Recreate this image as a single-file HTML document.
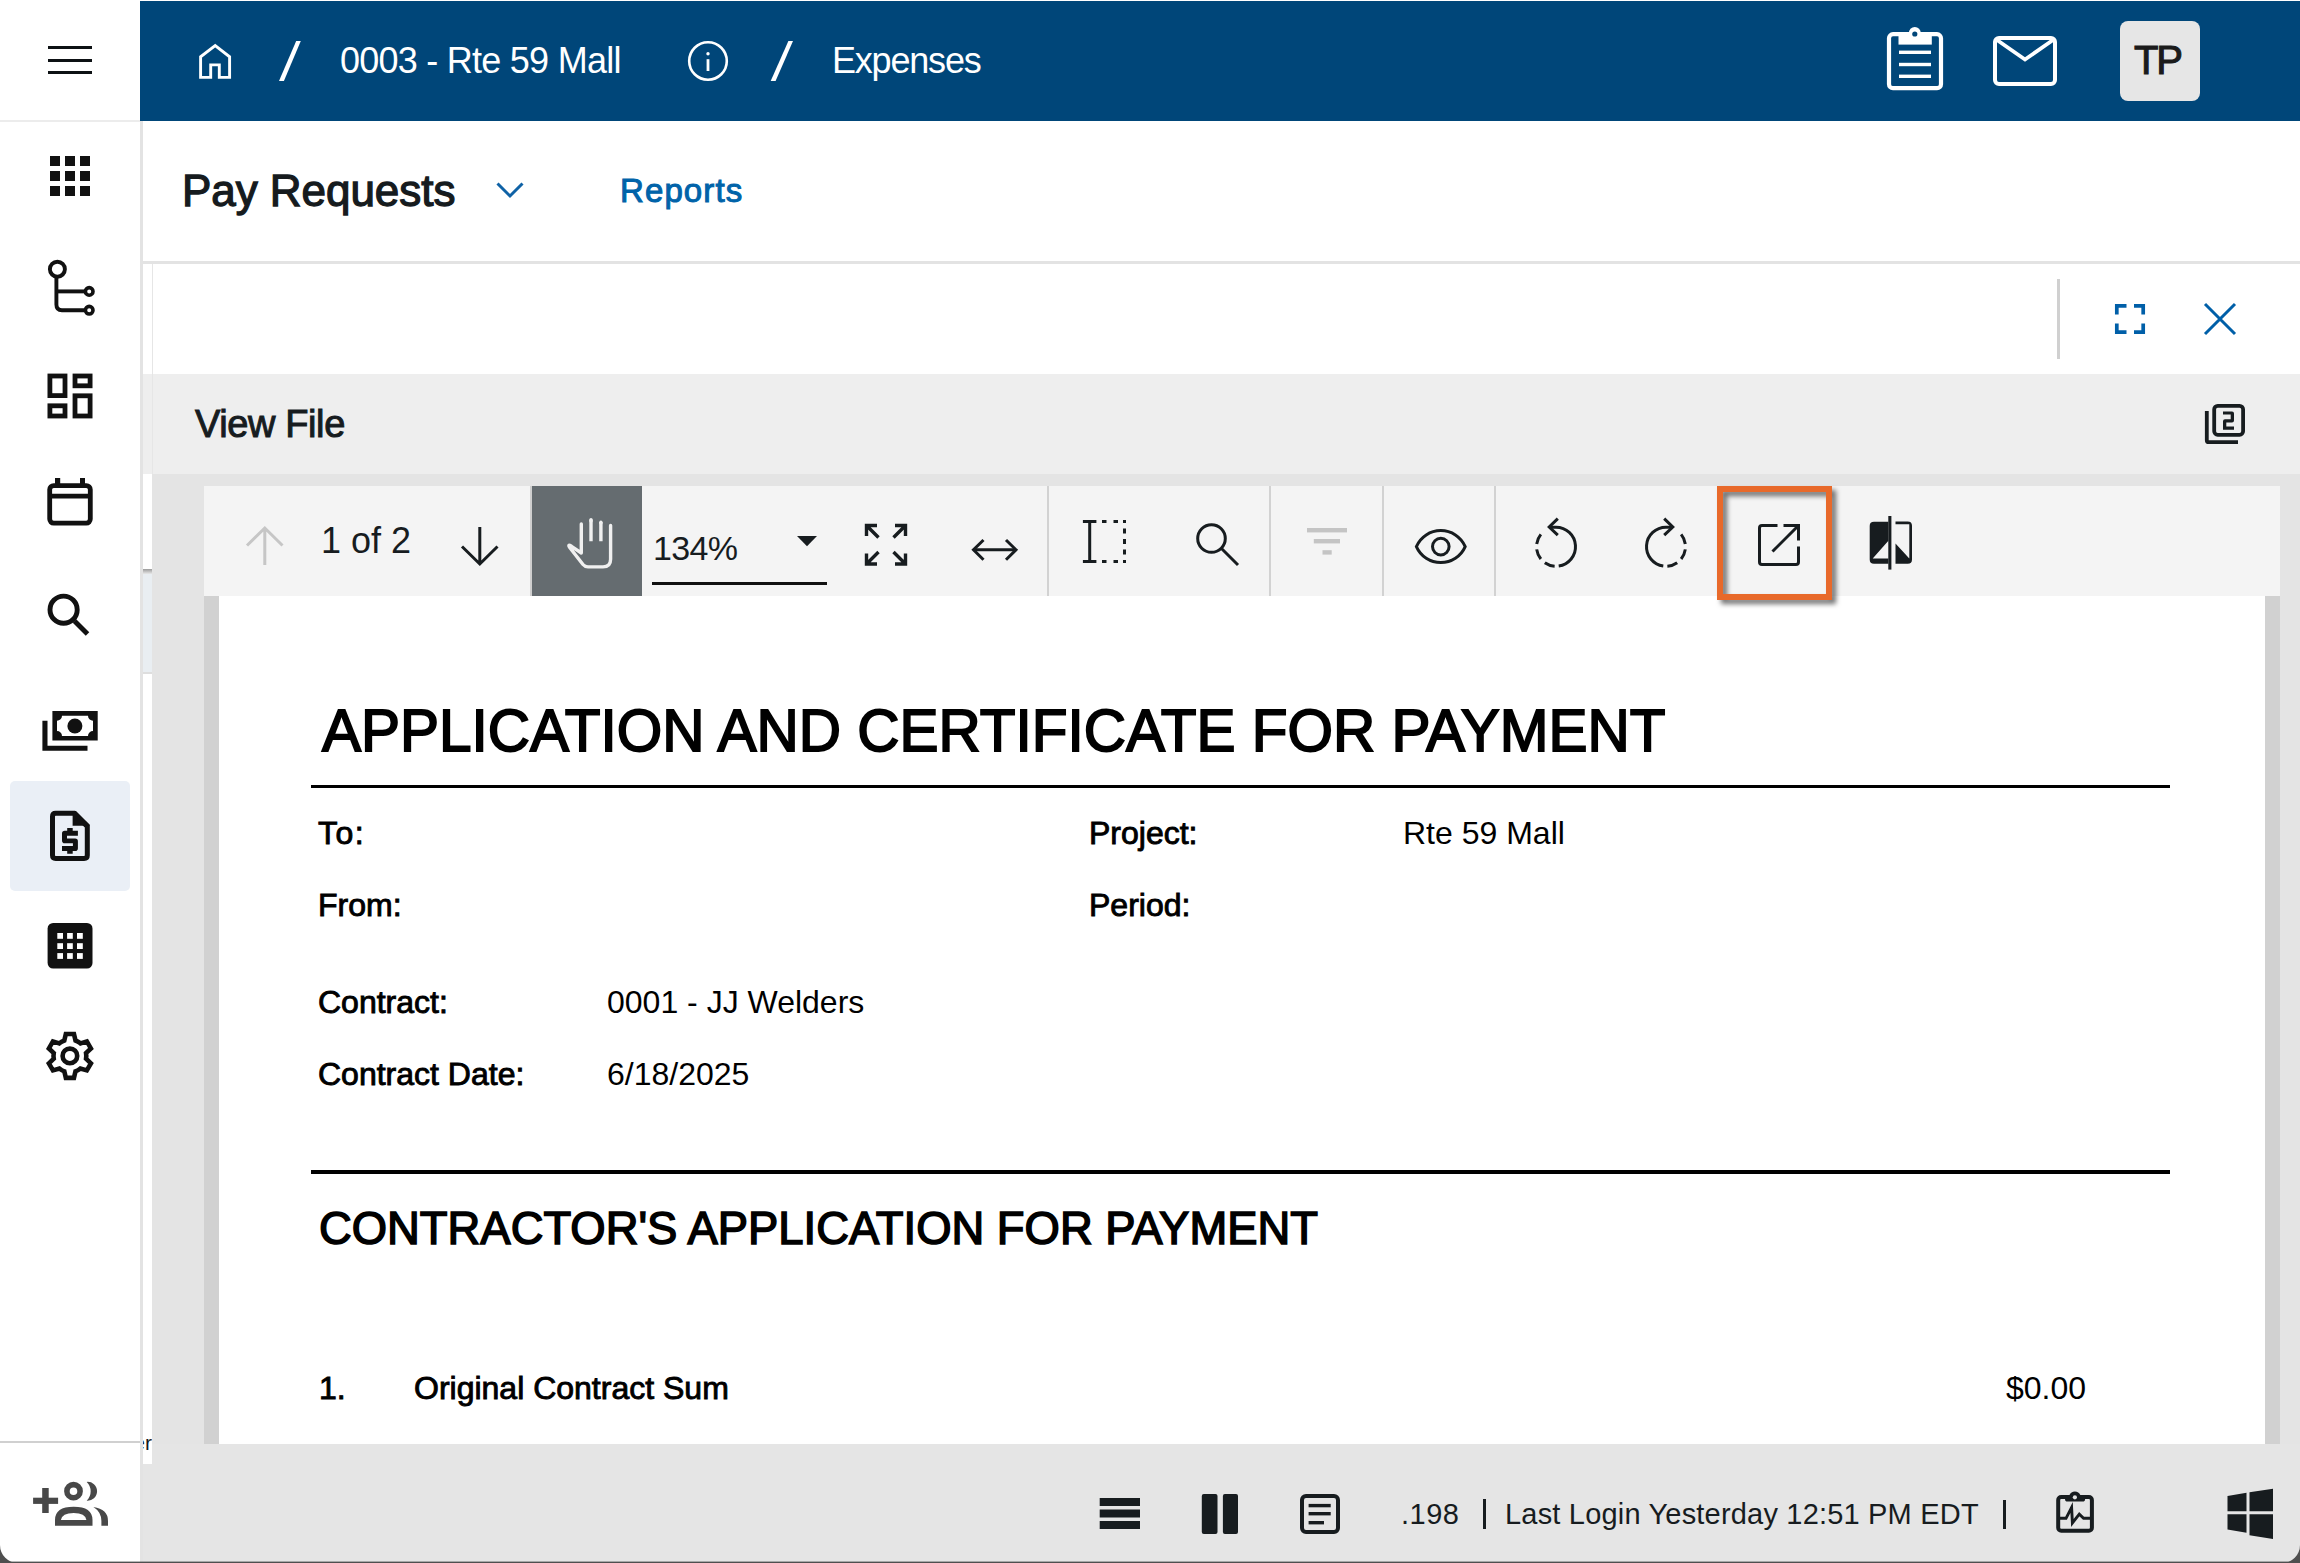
<!DOCTYPE html>
<html><head><meta charset="utf-8">
<style>
*{margin:0;padding:0;box-sizing:border-box}
html,body{width:2300px;height:1563px;overflow:hidden;background:#fff;font-family:"Liberation Sans",sans-serif;color:#171c1f}
.a{position:absolute}
.t{position:absolute;white-space:nowrap;line-height:1}
svg{position:absolute;overflow:visible}
</style></head><body>
<div id="root" class="a" style="left:0;top:0;width:2300px;height:1563px;overflow:hidden">

<!-- sidebar -->
<div class="a" style="left:0;top:0;width:140px;height:1563px;background:#fff"></div>
<div class="a" style="left:0;top:120px;width:140px;height:2px;background:#ececec"></div>
<div class="a" style="left:140px;top:120px;width:3px;height:1443px;background:#e3e3e3"></div>
<div class="a" style="left:0;top:1441px;width:140px;height:2px;background:#d0d0d0"></div>


<!-- sidebar icons -->
<div class="a" style="left:10px;top:781px;width:120px;height:110px;background:#eaeff6;border-radius:5px"></div>
<svg style="left:0;top:0" width="140" height="1563">
<g fill="#111">
<rect x="50" y="156" width="10" height="10"/><rect x="65" y="156" width="10" height="10"/><rect x="80" y="156" width="10" height="10"/>
<rect x="50" y="171" width="10" height="10"/><rect x="65" y="171" width="10" height="10"/><rect x="80" y="171" width="10" height="10"/>
<rect x="50" y="186" width="10" height="10"/><rect x="65" y="186" width="10" height="10"/><rect x="80" y="186" width="10" height="10"/>
</g>
<g fill="none" stroke="#111" stroke-width="3.9">
<circle cx="57.4" cy="269.2" r="7.5"/>
<path d="M56.4 276.5 V304.5 Q56.4 310.2 62 310.2 H84.5"/>
<path d="M56.4 291.4 H84.5"/>
<circle cx="89.2" cy="291.4" r="3.8" stroke-width="3.6"/>
<circle cx="89.2" cy="310.2" r="3.8" stroke-width="3.6"/>
</g>
<g fill="none" stroke="#111" stroke-width="4.8">
<rect x="49.9" y="376" width="15.1" height="19.6"/>
<rect x="75" y="376" width="15.1" height="9.8"/>
<rect x="49.9" y="405.8" width="15.1" height="10.2"/>
<rect x="75" y="395.8" width="15.1" height="20.2"/>
</g>
<g fill="none" stroke="#111" stroke-width="4.8">
<rect x="49.7" y="485.6" width="40.6" height="37.5" rx="4"/>
<path d="M49.7 496.1 H90.3"/>
</g>
<g fill="#111">
<rect x="55" y="478" width="5.2" height="7"/><rect x="80" y="478" width="5" height="7"/>
</g>
<g fill="none" stroke="#111" stroke-width="4.9">
<circle cx="63.6" cy="609.7" r="13.6"/>
<path d="M74.5 621 L87.5 634"/>
</g>
<g fill="#111">
<path fill-rule="evenodd" d="M52.4 711 H97.7 V740.6 H52.4 Z M62 715.8 H88 A5 5 0 0 0 93 720.8 V731 A5 5 0 0 0 88 736 H62 A5 5 0 0 0 57 731 V720.8 A5 5 0 0 0 62 715.8 Z"/>
<circle cx="74.9" cy="726" r="7.5"/>
<path d="M42.4 720.7 H47.5 V745.8 H87.5 V750.7 H42.4 Z"/>
</g>
<g>
<path d="M52.5 816.5 Q52.5 813.3 55.7 813.3 H74 L87.3 826.6 V855.2 Q87.3 858.4 84.1 858.4 H55.7 Q52.5 858.4 52.5 855.2 Z" fill="none" stroke="#111" stroke-width="5"/>
<path d="M72.6 811 H76 L89.8 824.8 V825.8 H72.6 Z" fill="#111"/>
<path d="M70 828 V831.6 H76.8 V836.5 H70 V832 M70 828 V853.8" fill="none" stroke="none"/>
<path d="M67.2 828 H72.7 V830.8 H77.9 V835.8 H67 V838.6 H75.1 A2.8 2.8 0 0 1 77.9 841.4 V848.2 A2.8 2.8 0 0 1 75.1 851 H72.7 V853.8 H67.2 V851 H62 V846 H72.9 V843.2 H64.8 A2.8 2.8 0 0 1 62 840.4 V833.6 A2.8 2.8 0 0 1 64.8 830.8 H67.2 Z" fill="#111"/>
</g>
<g>
<rect x="47.6" y="923" width="44.9" height="45.5" rx="5.5" fill="#111"/>
<g fill="#fff">
<rect x="57.3" y="933" width="5.7" height="5.8"/><rect x="67.1" y="933" width="5.7" height="5.8"/><rect x="77" y="933" width="5.8" height="5.8"/>
<rect x="57.3" y="943.2" width="5.7" height="5.8"/><rect x="67.1" y="943.2" width="5.7" height="5.8"/><rect x="77" y="943.2" width="5.8" height="5.8"/>
<rect x="57.3" y="953.1" width="5.7" height="5.8"/><rect x="67.1" y="953.1" width="5.7" height="5.8"/><rect x="77" y="953.1" width="5.8" height="5.8"/>
</g>
</g>
<g transform="translate(69.9 1055.9)" fill="none" stroke="#111" stroke-width="4.6">
<path d="M-5.61 -15.41 L-4.06 -21.93 L4.06 -21.93 L5.61 -15.41 A16.4 16.4 0 0 1 10.54 -12.56 L16.96 -14.48 L21.02 -7.44 L16.15 -2.85 A16.4 16.4 0 0 1 16.15 2.85 L21.02 7.44 L16.96 14.48 L10.54 12.56 A16.4 16.4 0 0 1 5.61 15.41 L4.06 21.93 L-4.06 21.93 L-5.61 15.41 A16.4 16.4 0 0 1 -10.54 12.56 L-16.96 14.48 L-21.02 7.44 L-16.15 2.85 A16.4 16.4 0 0 1 -16.15 -2.85 L-21.02 -7.44 L-16.96 -14.48 L-10.54 -12.56 A16.4 16.4 0 0 1 -5.61 -15.41 Z" stroke-linejoin="miter"/>
<circle cx="0" cy="0" r="7.3"/>
</g>
<g fill="#484848">
<rect x="42.2" y="1488" width="6.5" height="25"/>
<rect x="33.1" y="1497.7" width="25" height="6.2"/>
<circle cx="73.5" cy="1491.2" r="6.6" fill="none" stroke="#484848" stroke-width="5.6"/>
<path fill-rule="evenodd" d="M55 1525.8 V1520 Q55 1506.8 73.7 1506.8 Q92.5 1506.8 92.5 1520 V1525.8 Z M60.9 1520 Q62 1513 73.7 1513 Q85.4 1513 86.4 1520 Z"/>
<path d="M86.7 1481.9 A9.4 9.4 0 1 1 86.7 1500.6 A13 13 0 0 0 86.7 1481.9 Z"/>
<path d="M93.4 1507 Q108 1509 108 1521 V1525.8 H101.4 V1521 Q101.4 1512 93.4 1507 Z"/>
</g>
</svg>

<!-- header -->
<div class="a" style="left:140px;top:1px;width:2160px;height:120px;background:#004679"></div>


<!-- hamburger -->
<div class="a" style="left:48px;top:46px;width:44px;height:3px;background:#0d1114"></div>
<div class="a" style="left:48px;top:58.5px;width:44px;height:3px;background:#0d1114"></div>
<div class="a" style="left:48px;top:71px;width:44px;height:3px;background:#0d1114"></div>
<!-- home -->
<svg style="left:0;top:0" width="2300" height="130">
<path d="M200.6 77.4 V56.8 L215.2 45.6 L229.6 56.8 V77.4 H219.3 V64.9 H210.7 V77.4 Z" fill="none" stroke="#fff" stroke-width="2.9" stroke-linejoin="miter"/>
<path d="M296.2 41 H300.8 L283.9 80.9 H279 Z" fill="#fff"/>
<circle cx="708" cy="61" r="18.8" fill="none" stroke="#fff" stroke-width="2.6"/>
<circle cx="708" cy="53.8" r="1.7" fill="#fff"/>
<rect x="706.6" y="59.2" width="2.8" height="11.8" fill="#fff"/>
<path d="M788.4 41 H793 L775.6 81 H770.7 Z" fill="#fff"/>
<!-- clipboard -->
<rect x="1889" y="34.2" width="52" height="54" rx="4" fill="none" stroke="#fff" stroke-width="4.2"/>
<rect x="1898.5" y="32" width="33.3" height="12.6" fill="#fff"/>
<circle cx="1914.8" cy="33" r="6" fill="#fff"/>
<circle cx="1914.8" cy="34" r="2.6" fill="#004679"/>
<rect x="1899" y="50.6" width="32" height="3.4" fill="#fff"/>
<rect x="1899" y="62.8" width="32" height="3.4" fill="#fff"/>
<rect x="1899" y="74.6" width="32" height="3.4" fill="#fff"/>
<!-- mail -->
<rect x="1995" y="38" width="60" height="46" rx="4" fill="none" stroke="#fff" stroke-width="4"/>
<path d="M1997 40 L2025 59.5 L2053 40" fill="none" stroke="#fff" stroke-width="3.8"/>
</svg>
<div class="a" style="left:2120px;top:21px;width:80px;height:80px;background:#e6e6e6;border-radius:8px"></div>
<div id="tp" class="t" style="left:2134px;top:40px;font-size:40px;letter-spacing:-2.3px;-webkit-text-stroke:1.1px #1b1b1b;color:#1b1b1b">TP</div>
<div id="h1" class="t" style="left:340px;top:43px;font-size:36px;letter-spacing:-0.75px;color:#fff">0003 - Rte 59 Mall</div>
<div id="h2" class="t" style="left:832px;top:43px;font-size:36px;letter-spacing:-1.2px;color:#fff">Expenses</div>

<!-- subheader -->
<div id="pr" class="t" style="left:182px;top:169px;font-size:44px;letter-spacing:-0.05px;-webkit-text-stroke:1.3px #161b1e;color:#161b1e">Pay Requests</div>
<svg style="left:0;top:0" width="800" height="260"><path d="M497.5 183.5 L510 196 L522.5 183.5" fill="none" stroke="#0f62a6" stroke-width="3"/></svg>
<div id="rep" class="t" style="left:620px;top:174px;font-size:33px;letter-spacing:1.1px;-webkit-text-stroke:1px #0063a9;color:#0063a9">Reports</div>

<div class="a" style="left:143px;top:261px;width:2157px;height:3px;background:#e3e3e3"></div>

<!-- left strip -->
<div class="a" style="left:143px;top:374px;width:9px;height:100px;background:#eeeeee"></div>
<div class="a" style="left:143px;top:569px;width:9px;height:5px;background:linear-gradient(#9a9a9a,#e9e9e9)"></div>
<div class="a" style="left:143px;top:574px;width:9px;height:98px;background:#e9eef2"></div>
<div class="a" style="left:143px;top:672px;width:9px;height:2px;background:#dedede"></div>
<div class="a" style="left:152px;top:264px;width:1px;height:211px;background:#e6e6e6"></div>

<!-- overlay header -->
<div class="a" style="left:2057px;top:279px;width:3px;height:80px;background:#d0d0d0"></div>


<svg style="left:0;top:0" width="2300" height="380">
<g fill="none" stroke="#005fa8" stroke-width="3.7" stroke-linecap="butt">
<path d="M2116.8 314.5 V305.8 H2126.5"/>
<path d="M2134 305.8 H2143.2 V314.5"/>
<path d="M2116.8 323.5 V332.2 H2126.5"/>
<path d="M2134 332.2 H2143.2 V323.5"/>
</g>
<path d="M2205 304 L2235 334 M2235 304 L2205 334" fill="none" stroke="#005fa8" stroke-width="3"/>
</svg>

<!-- view file bar -->
<div class="a" style="left:153px;top:374px;width:2147px;height:100px;background:#eeeeee"></div>

<!-- viewer bg -->
<div class="a" style="left:152px;top:474px;width:2148px;height:1090px;background:#e4e4e4"></div>
<!-- toolbar -->
<div class="a" style="left:204px;top:486px;width:2076px;height:110px;background:#f4f4f4"></div>

<!-- toolbar content -->
<div class="a" style="left:530px;top:486px;width:2px;height:110px;background:#cfcfcf"></div>
<div class="a" style="left:532px;top:486px;width:110px;height:110px;background:#656c70"></div>
<div class="a" style="left:1047px;top:486px;width:2px;height:110px;background:#d2d2d2"></div>
<div class="a" style="left:1269px;top:486px;width:2px;height:110px;background:#d2d2d2"></div>
<div class="a" style="left:1382px;top:486px;width:2px;height:110px;background:#d2d2d2"></div>
<div class="a" style="left:1494px;top:486px;width:2px;height:110px;background:#d2d2d2"></div>
<div id="pg" class="t" style="left:321px;top:523px;font-size:36px;color:#171c1f">1 of 2</div>
<div id="zm" class="t" style="left:653px;top:531px;font-size:34px;letter-spacing:-0.7px;color:#171c1f">134%</div>
<div class="a" style="left:652px;top:582px;width:175px;height:2.8px;background:#111"></div>
<svg style="left:0;top:0" width="2300" height="620">
<path d="M797 536 H817 L807 546.2 Z" fill="#171c1f"/>
<g fill="none" stroke="#c6c6c6" stroke-width="3">
<path d="M264.8 565 V529.5 M247 545.5 L264.8 528 L282.5 545.5"/>
</g>
<g fill="none" stroke="#171c1f" stroke-width="3">
<path d="M479.8 527 V562.5 M462 546.5 L479.8 564 L497.5 546.5"/>
</g>
<g fill="none" stroke="#f0f0f0" stroke-width="3.4" stroke-linejoin="round" stroke-linecap="round">
<path d="M581.3 524 V553 L571.5 546.3 Q567.5 543.8 569.5 547.2 L583 564.5 Q585 566.9 588 566.9 H603 Q610.6 566.9 610.6 559.3 V525.5"/>
<path d="M591 519.5 V541.2 M600.9 522 V541.2" stroke-linecap="butt"/>
<path d="M591 519.8 V521 M600.9 522.3 V523"/>
</g>
<g fill="none" stroke="#171c1f" stroke-width="3.4">
<path d="M866.5 536 V525.5 H877 M866.5 525.5 L878.5 537.5"/>
<path d="M895 525.5 H905.5 V536 M905.5 525.5 L893.5 537.5"/>
<path d="M866.5 553.5 V564 H877 M866.5 564 L878.5 552"/>
<path d="M895 564 H905.5 V553.5 M905.5 564 L893.5 552"/>
</g>
<g fill="none" stroke="#171c1f" stroke-width="3">
<path d="M973.5 549.8 H1016"/>
<path d="M983.5 540 L973.5 549.8 L983.5 559.7"/>
<path d="M1006 540 L1016 549.8 L1006 559.7"/>
</g>
<g fill="#171c1f">
<rect x="1082.9" y="520" width="13.5" height="3"/>
<rect x="1082.9" y="560" width="13.5" height="3"/>
<rect x="1088.2" y="520" width="3" height="43"/>
<rect x="1102" y="520" width="4.5" height="3"/><rect x="1113.5" y="520" width="4.5" height="3"/><rect x="1123" y="520" width="3" height="3"/>
<rect x="1102" y="560" width="4.5" height="3"/><rect x="1113.5" y="560" width="4.5" height="3"/><rect x="1123" y="560" width="3" height="3"/>
<rect x="1123" y="528.5" width="3" height="5"/><rect x="1123" y="539" width="3" height="5"/><rect x="1123" y="549.5" width="3" height="5"/>
</g>
<g fill="none" stroke="#171c1f" stroke-width="3">
<circle cx="1211.5" cy="538.5" r="13.8"/>
<path d="M1221.5 548.5 L1238 565"/>
</g>
<g fill="#c4c4c4">
<rect x="1307" y="528" width="40" height="4.4"/>
<rect x="1313.8" y="539" width="26.2" height="4.4"/>
<rect x="1322.5" y="550.2" width="9.2" height="4.4"/>
</g>
<g fill="none" stroke="#171c1f" stroke-width="3">
<path d="M1416.4 546.6 A26.6 26.6 0 0 1 1465.2 546.6 A26.6 26.6 0 0 1 1416.4 546.6 Z"/>
<circle cx="1440.8" cy="546.6" r="8.3"/>
</g>
<g fill="none" stroke="#171c1f" stroke-width="3">
<path d="M1549.5 527.2 H1556 A19.5 19.5 0 0 1 1558.71 566.01 M1554.64 566.15 A19.5 19.5 0 0 1 1544.82 562.67 M1540.85 558.97 A19.5 19.5 0 0 1 1536.69 549.41 M1536.69 543.99 A19.5 19.5 0 0 1 1540.85 534.43"/>
<path d="M1557.8 518.6 L1549.2 527 L1557.8 535.2"/>
<path d="M1663.29 566.01 A19.5 19.5 0 0 1 1666.00 527.20 H1672.5 M1677.18 562.67 A19.5 19.5 0 0 1 1667.36 566.15 M1685.31 549.41 A19.5 19.5 0 0 1 1681.15 558.97 M1681.15 534.43 A19.5 19.5 0 0 1 1685.31 543.99"/>
<path d="M1664.2 518.6 L1672.8 527 L1664.2 535.2"/>
</g>
<g fill="none" stroke="#171c1f" stroke-width="3">
<path d="M1777.5 525.5 H1762 Q1759.5 525.5 1759.5 528 V562 Q1759.5 564.5 1762 564.5 H1796 Q1798.5 564.5 1798.5 562 V546.5"/>
<path d="M1783.5 525.5 H1798.5 V540.5"/>
<path d="M1798 526 L1772.5 551.5"/>
</g>
<g fill="#171c1f">
<rect x="1888.3" y="516" width="3.1" height="53.6"/>
<path d="M1888.4 521.8 H1874 Q1869.7 521.8 1869.7 526 V559.5 Q1869.7 563.8 1874 563.8 H1888.4 V558.4 H1872.7 L1888.4 540.8 Z"/>
<path d="M1895.5 521.5 H1907.7 Q1912 521.5 1912 525.8 V559.5 Q1912 563.8 1907.7 563.8 H1895.5 V543.5 L1909.3 558.5 V524.2 H1895.5 Z"/>
</g>
</svg>

<!-- page area -->
<div class="a" style="left:204px;top:596px;width:2076px;height:848px;background:#d1d1d1"></div>
<div class="a" style="left:219px;top:596px;width:2046px;height:848px;background:#fff"></div>


<div id="vf" class="t" style="left:195px;top:405px;font-size:38px;letter-spacing:-0.4px;-webkit-text-stroke:1px #171c1f;color:#171c1f">View File</div>
<svg style="left:0;top:0" width="2300" height="480">
<rect x="2214.2" y="405.8" width="28.9" height="29" rx="3.5" fill="none" stroke="#171c1f" stroke-width="3.8"/>
<path d="M2206.8 411 V440.2 Q2206.8 442.2 2208.8 442.2 H2238" fill="none" stroke="#171c1f" stroke-width="3.8"/>
<path d="M2223 411.4 H2232 Q2234 411.4 2234 413.4 V420.5 Q2234 422.5 2232 422.5 H2226.3 V426.5 H2234 V429.7 H2223 V421.3 Q2223 419.3 2225 419.3 H2230.7 V414.6 H2223 Z" fill="#171c1f"/>
</svg>

<!-- orange highlight -->
<div class="a" style="left:1717px;top:486px;width:115px;height:114px;border:6px solid #e8692a;filter:drop-shadow(4px 4px 2.5px rgba(0,0,0,0.55))"></div>

<!-- document -->
<div id="d1" class="t" style="left:322px;top:702px;font-size:58.5px;-webkit-text-stroke:1.8px #000;color:#000">APPLICATION AND CERTIFICATE FOR PAYMENT</div>
<div class="a" style="left:311px;top:784.5px;width:1859px;height:3.8px;background:#000"></div>
<div id="d2" class="t" style="left:318px;top:817px;font-size:32px;letter-spacing:1.5px;-webkit-text-stroke:0.9px #000;color:#000">To:</div>
<div id="d3" class="t" style="left:318px;top:889px;font-size:32px;-webkit-text-stroke:0.9px #000;color:#000">From:</div>
<div id="d4" class="t" style="left:1089px;top:817px;font-size:32px;-webkit-text-stroke:0.9px #000;color:#000">Project:</div>
<div id="d5" class="t" style="left:1089px;top:889px;font-size:32px;-webkit-text-stroke:0.9px #000;color:#000">Period:</div>
<div id="d6" class="t" style="left:1403px;top:817px;font-size:32px;color:#000">Rte 59 Mall</div>
<div id="d7" class="t" style="left:318px;top:986px;font-size:32px;-webkit-text-stroke:0.9px #000;color:#000">Contract:</div>
<div id="d8" class="t" style="left:318px;top:1058px;font-size:32px;-webkit-text-stroke:0.9px #000;color:#000">Contract Date:</div>
<div id="d9" class="t" style="left:607px;top:986px;font-size:32px;color:#000">0001 - JJ Welders</div>
<div id="d10" class="t" style="left:607px;top:1058px;font-size:32px;color:#000">6/18/2025</div>
<div class="a" style="left:311px;top:1170px;width:1859px;height:3.6px;background:#000"></div>
<div id="d11" class="t" style="left:319px;top:1206px;font-size:45.4px;-webkit-text-stroke:1.5px #000;color:#000">CONTRACTOR'S APPLICATION FOR PAYMENT</div>
<div id="d12" class="t" style="left:319px;top:1372px;font-size:32px;-webkit-text-stroke:0.9px #000;color:#000">1.</div>
<div id="d13" class="t" style="left:414px;top:1372px;font-size:32px;-webkit-text-stroke:0.9px #000;color:#000">Original Contract Sum</div>
<div id="d14" class="t" style="left:2006px;top:1372px;font-size:32px;color:#000">$0.00</div>

<!-- status bar -->
<div class="a" style="left:143px;top:1444px;width:2157px;height:119px;background:#e5e5e5"></div>


<svg style="left:0;top:0" width="2300" height="1563">
<g fill="#171c1f">
<rect x="1099.7" y="1498" width="40.3" height="8"/>
<rect x="1099.7" y="1509.5" width="40.3" height="8"/>
<rect x="1099.7" y="1521" width="40.3" height="8"/>
<rect x="1201.8" y="1494" width="15.7" height="40" rx="2"/>
<rect x="1222.9" y="1494" width="15.1" height="40" rx="2"/>
</g>
<rect x="1302" y="1496" width="36" height="36" rx="4" fill="none" stroke="#171c1f" stroke-width="4"/>
<g fill="#171c1f">
<rect x="1308.6" y="1503.9" width="22.1" height="3.4"/>
<rect x="1308.6" y="1512" width="22.1" height="3.4"/>
<rect x="1308.6" y="1521" width="15.4" height="3.4"/>
</g>
<rect x="2058.2" y="1497" width="33.7" height="33.8" rx="3" fill="none" stroke="#171c1f" stroke-width="4"/>
<path d="M2065 1495 H2069.47 A5.9 5.9 0 0 1 2080.33 1495 H2085.1 V1499 Q2085.1 1501.6 2082.5 1501.6 H2067.6 Q2065 1501.6 2065 1499 Z" fill="#171c1f"/>
<circle cx="2074.9" cy="1497.3" r="2.1" fill="#e5e5e5"/>
<path d="M2058 1518.3 H2066 L2071.6 1507.5 L2072.4 1523 L2079.3 1514.2 L2083.6 1518.3 H2092" fill="none" stroke="#171c1f" stroke-width="2.9" stroke-linejoin="miter" stroke-miterlimit="4"/>
<g fill="#171c1f">
<path d="M2227.5 1496 L2246.5 1492.8 V1511.3 H2227.5 Z"/>
<path d="M2249.5 1492.3 L2273 1488.8 V1511.3 H2249.5 Z"/>
<path d="M2227.5 1514.3 H2246.5 V1532.7 L2227.5 1529.5 Z"/>
<path d="M2249.5 1514.3 H2273 V1539 L2249.5 1535.3 Z"/>
</g>
</svg>
<div id="s1" class="t" style="left:1401px;top:1500px;font-size:29px;letter-spacing:0.5px;color:#171c1f">.198</div>
<div class="a" style="left:1483px;top:1499px;width:2.6px;height:30px;background:#171c1f"></div>
<div id="s2" class="t" style="left:1505px;top:1500px;font-size:29px;letter-spacing:0.19px;color:#171c1f">Last Login Yesterday 12:51 PM EDT</div>
<div class="a" style="left:2003px;top:1499.5px;width:2.6px;height:29px;background:#171c1f"></div>

<div class="a" style="left:143px;top:1444px;width:9px;height:20px;background:#fff"></div>
<div class="a" style="left:143px;top:1428px;width:9px;height:26px;overflow:hidden"><div class="t" style="right:0;top:4px;font-size:21px;color:#15191c">er</div></div>
<!-- window bottom edge -->
<svg style="left:0;top:1530px" width="2300" height="33">
<path d="M0 0 V15 A18 18 0 0 0 18 33 H0 Z" fill="#4f4f4f"/>
<path d="M2300 0 V15 A18 18 0 0 1 2282 33 H2300 Z" fill="#4f4f4f"/>
<rect x="0" y="31.6" width="2300" height="1.4" fill="#4f4f4f"/>
</svg>
</div>
</body></html>
